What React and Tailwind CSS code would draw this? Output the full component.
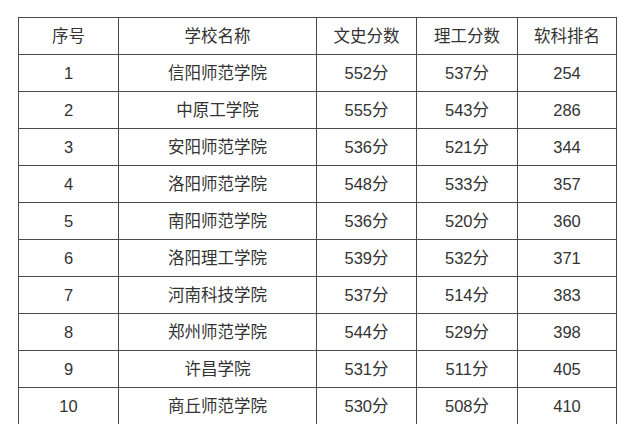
const headers = ['序号', '学校名称', '文史分数', '理工分数', '软科排名'];

const rows = [
  ['1', '信阳师范学院', '552分', '537分', '254'],
  ['2', '中原工学院', '555分', '543分', '286'],
  ['3', '安阳师范学院', '536分', '521分', '344'],
  ['4', '洛阳师范学院', '548分', '533分', '357'],
  ['5', '南阳师范学院', '536分', '520分', '360'],
  ['6', '洛阳理工学院', '539分', '532分', '371'],
  ['7', '河南科技学院', '537分', '514分', '383'],
  ['8', '郑州师范学院', '544分', '529分', '398'],
  ['9', '许昌学院', '531分', '511分', '405'],
  ['10', '商丘师范学院', '530分', '508分', '410'],
];

export default function App() {
  return (
    <div
      className="w-[638px] h-[424px] overflow-hidden bg-white pl-[18px] pt-[17px]"
      style={{ fontFamily: '"Liberation Sans", "Noto Sans CJK SC", sans-serif' }}
    >
      <div className="grid w-fit grid-cols-[99px_197px_99px_100px_98px] auto-rows-[36px] gap-px bg-[#4a4a4a] p-px">
        {headers.map((h) => (
          <div key={h} className="flex items-center justify-center bg-white text-[16.5px] text-[#333]">
            {h}
          </div>
        ))}
        {rows.map((r) =>
          r.map((c, i) => (
            <div
              key={r[0] + '-' + i}
              className="flex items-center justify-center bg-white text-[16.5px] text-[#333]"
            >
              {c}
            </div>
          ))
        )}
      </div>
    </div>
  );
}
